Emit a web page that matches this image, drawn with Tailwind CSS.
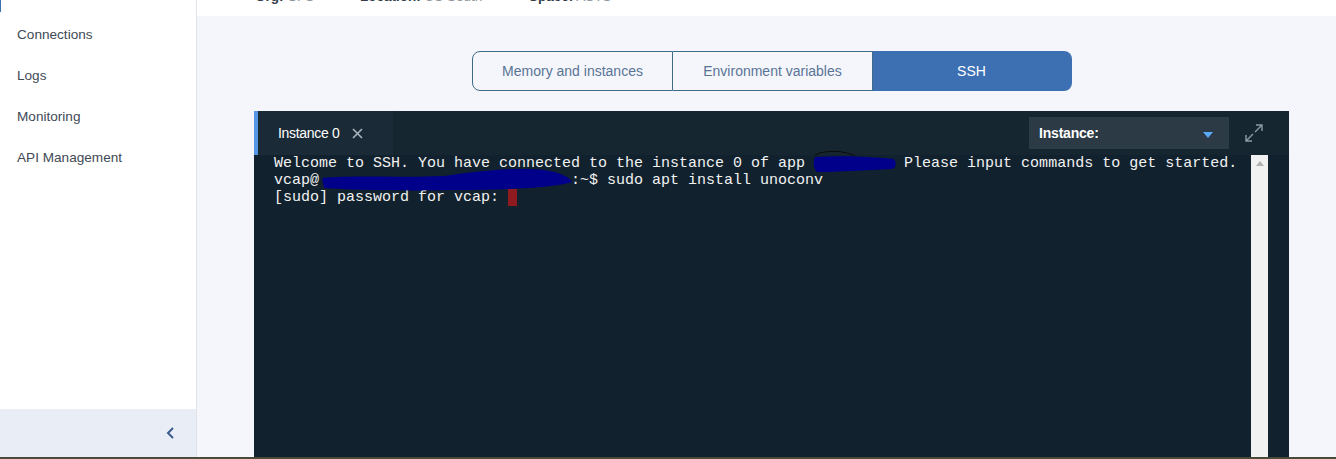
<!DOCTYPE html>
<html lang="en">
<head>
  <meta charset="UTF-8" />
  <meta name="viewport" content="width=device-width, initial-scale=1" />
  <title>SSH</title>
  <script src="https://cdn.jsdelivr.net/npm/@tailwindcss/browser@4"></script>
</head>
<body class="h-[459px] w-[1336px] overflow-hidden bg-[#f4f6fb] font-['Liberation_Sans',sans-serif]">
  <div class="flex h-[457px]">
    <!-- sidebar -->
    <aside class="relative flex w-[197px] shrink-0 flex-col border-r border-[#dfe3ea] bg-white">
      <div class="absolute left-0 top-0 h-[12px] w-[1px] bg-[#3d70b2]"></div>
      <nav class="flex flex-1 flex-col gap-[21px] pl-[17px] pt-[25px] text-[13.6px] leading-[20px] text-[#3f4a56]">
        <a>Connections</a>
        <a>Logs</a>
        <a>Monitoring</a>
        <a>API Management</a>
      </nav>
      <div class="flex h-[48px] items-center justify-end bg-[#e9eef6] pr-[21px]">
        <svg width="10" height="14" viewBox="0 0 10 14" fill="none" stroke="#3d5a8c" stroke-width="2"><path d="M8 2 L3 7 L8 12" /></svg>
      </div>
    </aside>

    <main class="flex min-w-0 flex-1 flex-col">
      <!-- org bar, cut off by the top of the window -->
      <div class="flex h-[16px] items-end overflow-hidden bg-white pb-[9px] pl-[58px] text-[13.5px] leading-[20px] text-[#8a939b]">
        <span class="w-[105px] shrink-0"><b class="text-[#323c47]">Org:</b> CFS</span>
        <span class="w-[169px] shrink-0"><b class="text-[#323c47]">Location:</b> US South</span>
        <span class="shrink-0"><b class="text-[#323c47]">Space:</b> ASTS</span>
      </div>

      <!-- tabs -->
      <div class="flex pl-[275px] pt-[35px]">
        <div class="flex h-[40px] w-[600px] text-[14px] text-[#5a7496]">
          <button class="h-full w-[201px] rounded-l-[8px] border border-[#3f6a8a]">Memory and instances</button>
          <button class="h-full w-[200px] border-y border-r border-[#3f6a8a]">Environment variables</button>
          <button class="h-full flex-1 rounded-r-[8px] bg-[#3d70b2] pr-[2px] text-white">SSH</button>
        </div>
      </div>

      <!-- terminal -->
      <section class="ml-[57px] mt-[20px] flex w-[1035px] flex-1 flex-col bg-[#11212d]">
        <header class="flex h-[44px] shrink-0 bg-[#162631]">
          <div class="flex w-[139px] items-center gap-[12px] border-l-[4px] border-[#5596e6] bg-[#1a2a36] pl-[20px] text-[14px] tracking-[-0.3px] text-white">
            <span>Instance 0</span>
            <svg width="11" height="11" viewBox="0 0 11 11" stroke="#aab4bd" stroke-width="1.6"><path d="M1 1 L10 10 M10 1 L1 10" /></svg>
          </div>
          <div class="ml-auto mr-[60px] mt-[6px] flex h-[32px] w-[200px] items-center justify-between bg-[#2b3a45] pl-[10px] pr-[16px] pt-[1px] text-[14px] font-bold tracking-[-0.2px] text-white">
            <span>Instance:</span>
            <span class="mt-[2px] h-0 w-0 border-x-[5px] border-t-[6px] border-x-transparent border-t-[#5aaafa]"></span>
          </div>
          <svg class="absolute left-[1245px] top-[124px]" width="18" height="18" viewBox="0 0 18 18" fill="none" stroke="#8d9ba6" stroke-width="1.4"><path d="M10 8 L17 1 M11 1 H17 V7 M8 10 L1 17 M1 11 V17 H7" /></svg>
        </header>

        <div class="flex min-h-0 flex-1">
          <pre class="relative flex-1 pl-[20px] font-['Liberation_Mono',monospace] text-[15px] leading-[17px] text-[#f2f2f2]">Welcome to SSH. You have connected to the instance 0 of app           Please input commands to get started.
vcap@                            :~$ sudo apt install unoconv
[sudo] password for vcap: <span class="inline-block h-[17px] w-[9px] bg-[#8f1a1f] align-top"></span><svg class="absolute left-0 top-0 overflow-visible" width="997" height="40" viewBox="0 0 997 40"><path d="M68 23 C100 20 150 23 190 21 C220 16 260 12 290 15 C305 17 316 22 318 27 C300 33 250 35 200 35 C150 36 100 35 70 33 Z" fill="#00008b" /><path d="M561 2 C590 0 620 2 640 4 C643 8 642 13 638 14 C610 15 585 17 563 17 C559 12 559 7 561 2 Z" fill="#00008b" /><path d="M561 0 C570 -5 590 -5 601 1" fill="none" stroke="#0a0a0a" stroke-width="1" /></svg></pre>
          <div class="mr-[21px] flex h-full w-[17px] shrink-0 justify-center bg-[#f1f1f1] pt-[6px]">
            <span class="h-0 w-0 border-x-[4px] border-b-[5px] border-x-transparent border-b-[#b0b0b0]"></span>
          </div>
        </div>
      </section>
    </main>
  </div>
  <div class="h-[2px] bg-[#4a4a38]"></div>
</body>
</html>
